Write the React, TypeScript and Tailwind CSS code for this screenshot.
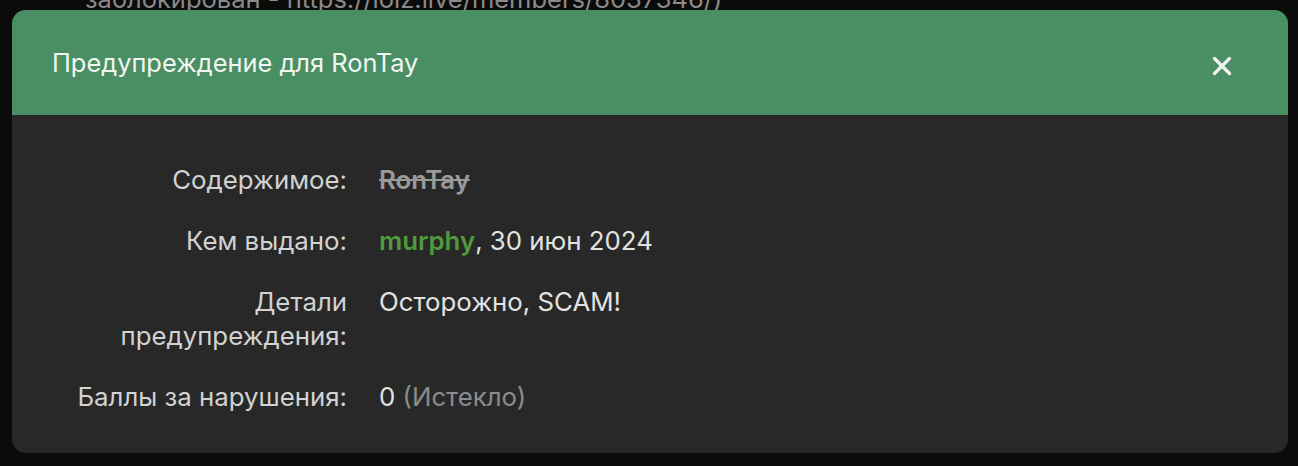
import React from "react";

export default function App() {
  const font = { fontFamily: '"Inter", "Noto Sans", sans-serif' };
  return (
    <div className="relative h-[466px] w-[1298px] overflow-hidden bg-[#0b0b0b]" style={font}>
      <div className="absolute left-[85px] top-[-20px] text-[25.5px] text-[#8a8a8a] whitespace-nowrap">
        заблокирован - https://lolz.live/members/8037346/)
      </div>
      <div className="relative ml-[12px] mt-[10px] w-[1276px] h-[443px] rounded-[14px] overflow-hidden bg-[#282828] flex flex-col">
        <div className="h-[105px] bg-[#4a8f64] flex items-center justify-between pl-[40px] pr-[55px]">
          <span className="text-[25.4px] text-[#f1f6f2] mt-[1px]">Предупреждение для RonTay</span>
          <svg width="22" height="22" viewBox="0 0 22 22" className="mt-[6px]">
            <path d="M3.5 3.5 L18.5 18.5 M18.5 3.5 L3.5 18.5" stroke="#eef4ef" strokeWidth="3.3" strokeLinecap="round" />
          </svg>
        </div>
        <div className="grid grid-cols-[335px_1fr] gap-x-[32px] gap-y-[27px] pt-[48px] text-[25.8px] leading-[34px]">
          <div className="text-right text-[#d2d2d2]">Содержимое:</div>
          <div className="text-[#9a9a9a] font-semibold line-through">RonTay</div>
          <div className="text-right text-[#d2d2d2]">Кем выдано:</div>
          <div className="text-[#e2e2e2]">
            <span className="text-[#4f9a3c] font-semibold">murphy</span>, 30 июн 2024
          </div>
          <div className="text-right text-[#d2d2d2]">
            Детали
            <br />
            предупреждения:
          </div>
          <div className="text-[#e2e2e2]">Осторожно, SCAM!</div>
          <div className="text-right text-[#d2d2d2]">Баллы за нарушения:</div>
          <div className="text-[#e2e2e2]">
            0 <span className="text-[#8c8c8c]">(Истекло)</span>
          </div>
        </div>
      </div>
    </div>
  );
}
